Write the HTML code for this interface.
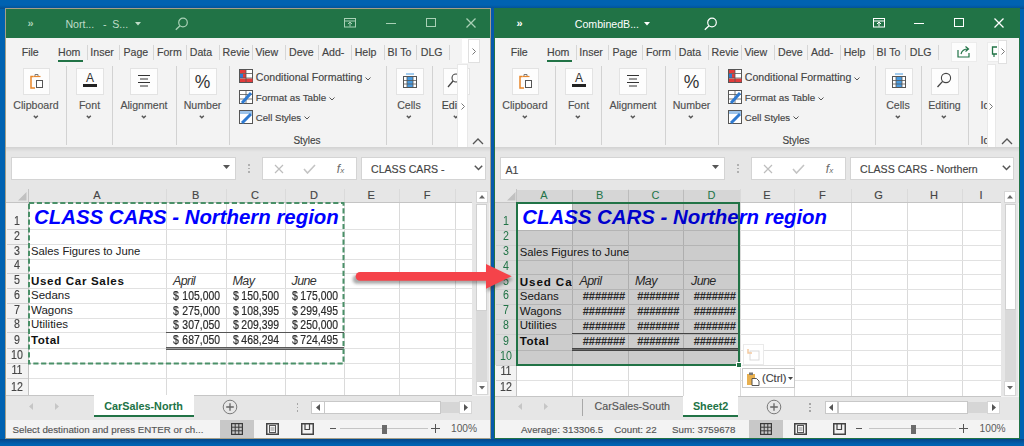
<!DOCTYPE html><html><head><meta charset="utf-8"><style>html,body{margin:0;padding:0;}body{width:1024px;height:446px;overflow:hidden;position:relative;background:#0062b1;font-family:"Liberation Sans",sans-serif;}.a{position:absolute;}.t{position:absolute;white-space:pre;}.u{-webkit-text-stroke:0.15px currentColor;}</style></head><body>
<div class="a" style="left:0px;top:0px;width:1024px;height:9px;background:linear-gradient(#0062b1 0%,#0062b1 55%,#044e92 100%);"></div>
<div class="a" style="left:489px;top:8px;width:7px;height:438px;background:#0658ac;"></div>
<div class="a" style="left:0px;top:439px;width:1024px;height:7px;background:linear-gradient(#03478a 0%,#04539c 35%,#0062b1 75%);"></div>
<div class="a" style="left:5px;top:8px;width:486px;height:431px;background:#f3f3f3;"></div>
<div class="a" style="left:5px;top:8px;width:486px;height:30px;background:#217346;"></div>
<div class="t" style="left:27.50px;top:18.19px;font-size:11px;line-height:11px;color:#a9d1b6;font-weight:700;">&#187;</div>
<div class="t" style="left:65.40px;top:18.53px;font-size:10.6px;line-height:10.6px;color:#bfdcc8;">Nort...</div>
<div class="t" style="left:103.00px;top:18.53px;font-size:10.6px;line-height:10.6px;color:#bfdcc8;">-</div>
<div class="t" style="left:112.30px;top:18.53px;font-size:10.6px;line-height:10.6px;color:#bfdcc8;">S...</div>
<svg class="a" style="left:135px;top:22px;" width="7" height="4" viewBox="0 0 7 4"><path d="M0 0 L6 0 L3 3.5 Z" fill="#bfdcc8"/></svg>
<svg class="a" style="left:175px;top:17px;" width="13" height="14" viewBox="0 0 13 14"><circle cx="8" cy="5.5" r="4.3" fill="none" stroke="#a9d1b6" stroke-width="1.2"/><path d="M5 8.7 L0.8 12.8" stroke="#a9d1b6" stroke-width="1.3"/></svg>
<svg class="a" style="left:344px;top:18px;" width="12" height="10" viewBox="0 0 12 10"><rect x="0.5" y="0.5" width="11" height="8.5" fill="none" stroke="#a9d1b6" stroke-width="1"/><path d="M0.5 3 H11.5" stroke="#a9d1b6"/><path d="M6 8.5 V4.2 M4 6 L6 4 L8 6" stroke="#a9d1b6" fill="none"/></svg>
<div class="a" style="left:386px;top:23px;width:10px;height:1px;background:#a9d1b6;"></div>
<div class="a" style="left:425.5px;top:18px;width:10.0px;height:9px;box-sizing:border-box;border:1px solid #a9d1b6;"></div>
<svg class="a" style="left:465.5px;top:18px;" width="10" height="10" viewBox="0 0 10 10"><path d="M0.5 0.5 L9.5 9.5 M9.5 0.5 L0.5 9.5" stroke="#a9d1b6" stroke-width="1.3"/></svg>
<div class="t u" style="left:21.70px;top:47.03px;font-size:10.6px;line-height:10.6px;color:#444;">File</div>
<div class="t u" style="left:58.00px;top:47.03px;font-size:10.6px;line-height:10.6px;color:#444;">Hom</div>
<div class="t u" style="left:90.30px;top:47.03px;font-size:10.6px;line-height:10.6px;color:#444;">Inser</div>
<div class="t u" style="left:123.50px;top:47.03px;font-size:10.6px;line-height:10.6px;color:#444;">Page</div>
<div class="t u" style="left:157.00px;top:47.03px;font-size:10.6px;line-height:10.6px;color:#444;">Form</div>
<div class="t u" style="left:189.80px;top:47.03px;font-size:10.6px;line-height:10.6px;color:#444;">Data</div>
<div class="t u" style="left:222.60px;top:47.03px;font-size:10.6px;line-height:10.6px;color:#444;">Revie</div>
<div class="t u" style="left:255.40px;top:47.03px;font-size:10.6px;line-height:10.6px;color:#444;">View</div>
<div class="t u" style="left:289.00px;top:47.03px;font-size:10.6px;line-height:10.6px;color:#444;">Deve</div>
<div class="t u" style="left:322.00px;top:47.03px;font-size:10.6px;line-height:10.6px;color:#444;">Add-</div>
<div class="t u" style="left:354.70px;top:47.03px;font-size:10.6px;line-height:10.6px;color:#444;">Help</div>
<div class="t u" style="left:387.50px;top:47.03px;font-size:10.6px;line-height:10.6px;color:#444;">BI To</div>
<div class="t u" style="left:420.80px;top:47.03px;font-size:10.6px;line-height:10.6px;color:#444;">DLG</div>
<div class="a" style="left:87px;top:45px;width:1px;height:15px;background:#d6d6d6;"></div>
<div class="a" style="left:119.4px;top:45px;width:1.0px;height:15px;background:#d6d6d6;"></div>
<div class="a" style="left:152.8px;top:45px;width:1.0px;height:15px;background:#d6d6d6;"></div>
<div class="a" style="left:186px;top:45px;width:1px;height:15px;background:#d6d6d6;"></div>
<div class="a" style="left:218.8px;top:45px;width:1.0px;height:15px;background:#d6d6d6;"></div>
<div class="a" style="left:251.7px;top:45px;width:1.0px;height:15px;background:#d6d6d6;"></div>
<div class="a" style="left:285.1px;top:45px;width:1.0px;height:15px;background:#d6d6d6;"></div>
<div class="a" style="left:318px;top:45px;width:1px;height:15px;background:#d6d6d6;"></div>
<div class="a" style="left:350.8px;top:45px;width:1.0px;height:15px;background:#d6d6d6;"></div>
<div class="a" style="left:383.6px;top:45px;width:1.0px;height:15px;background:#d6d6d6;"></div>
<div class="a" style="left:416.4px;top:45px;width:1.0px;height:15px;background:#d6d6d6;"></div>
<div class="a" style="left:449.2px;top:45px;width:1.0px;height:15px;background:#d6d6d6;"></div>
<div class="a" style="left:58px;top:59.8px;width:25px;height:2.5px;background:#217346;"></div>
<div class="a" style="left:23px;top:68px;width:27px;height:27px;background:#fdfdfd;box-sizing:border-box;border:1px solid #e3e3e3;"></div>
<div class="a" style="left:75.5px;top:68px;width:28.5px;height:27px;background:#fdfdfd;box-sizing:border-box;border:1px solid #e3e3e3;"></div>
<div class="a" style="left:130px;top:68px;width:28px;height:27px;background:#fdfdfd;box-sizing:border-box;border:1px solid #e3e3e3;"></div>
<div class="a" style="left:188.5px;top:68px;width:28.0px;height:27px;background:#fdfdfd;box-sizing:border-box;border:1px solid #e3e3e3;"></div>
<div class="a" style="left:396px;top:68px;width:28px;height:27px;background:#fdfdfd;box-sizing:border-box;border:1px solid #e3e3e3;"></div>
<svg class="a" style="left:30px;top:73px;" width="14" height="16" viewBox="0 0 14 16"><path d="M5 4 V1.5 H8 V4" fill="none" stroke="#7a7a7a"/><path d="M3.5 3.5 H1 V15 H5" fill="none" stroke="#e8862a" stroke-width="1.5"/><path d="M3.5 3.5 H10.5" stroke="#e8862a" stroke-width="1.2"/><rect x="6.5" y="7.5" width="6" height="7" fill="#fff" stroke="#555"/></svg>
<svg class="a" style="left:82px;top:71px;" width="16" height="20" viewBox="0 0 16 20"><text x="8" y="11" font-family="Liberation Sans" font-size="12" fill="#333" text-anchor="middle">A</text><rect x="1" y="13" width="14" height="3" fill="#222"/></svg>
<svg class="a" style="left:137px;top:74px;" width="14" height="14" viewBox="0 0 14 14"><path d="M1 1.5 H13 M3 5 H11 M1 8.5 H13 M3 12 H11" stroke="#333" stroke-width="1"/></svg>
<div class="t" style="left:52.50px;width:300px;text-align:center;top:73.69px;font-size:17.5px;line-height:17.5px;color:#333;">%</div>
<svg class="a" style="left:403px;top:72px;" width="14" height="17" viewBox="0 0 14 17"><rect x="0.5" y="4.5" width="13" height="11" fill="#fff" stroke="#555"/><rect x="4" y="5" width="6" height="10" fill="#4a9be0"/><path d="M0.5 8.5 H13.5 M0.5 12 H13.5 M4 4.5 V15.5 M10 4.5 V15.5" stroke="#555" stroke-width="0.8"/><path d="M3 2 H11" stroke="#4a9be0" stroke-width="1"/></svg>
<div class="t u" style="left:-114.00px;width:300px;text-align:center;top:99.53px;font-size:10.6px;line-height:10.6px;color:#505050;">Clipboard</div>
<svg class="a" style="left:32.7px;top:115.3px;" width="6" height="4" viewBox="0 0 6 4"><path d="M0.8 0.8 L2.8 2.8 L4.8 0.8" fill="none" stroke="#555" stroke-width="1.4"/></svg>
<div class="t u" style="left:-60.50px;width:300px;text-align:center;top:99.53px;font-size:10.6px;line-height:10.6px;color:#505050;">Font</div>
<svg class="a" style="left:86.2px;top:115.3px;" width="6" height="4" viewBox="0 0 6 4"><path d="M0.8 0.8 L2.8 2.8 L4.8 0.8" fill="none" stroke="#555" stroke-width="1.4"/></svg>
<div class="t u" style="left:-6.00px;width:300px;text-align:center;top:99.53px;font-size:10.6px;line-height:10.6px;color:#505050;">Alignment</div>
<svg class="a" style="left:140.7px;top:115.3px;" width="6" height="4" viewBox="0 0 6 4"><path d="M0.8 0.8 L2.8 2.8 L4.8 0.8" fill="none" stroke="#555" stroke-width="1.4"/></svg>
<div class="t u" style="left:52.50px;width:300px;text-align:center;top:99.53px;font-size:10.6px;line-height:10.6px;color:#505050;">Number</div>
<svg class="a" style="left:199.2px;top:115.3px;" width="6" height="4" viewBox="0 0 6 4"><path d="M0.8 0.8 L2.8 2.8 L4.8 0.8" fill="none" stroke="#555" stroke-width="1.4"/></svg>
<div class="t u" style="left:259.00px;width:300px;text-align:center;top:99.53px;font-size:10.6px;line-height:10.6px;color:#505050;">Cells</div>
<svg class="a" style="left:405.7px;top:115.3px;" width="6" height="4" viewBox="0 0 6 4"><path d="M0.8 0.8 L2.8 2.8 L4.8 0.8" fill="none" stroke="#555" stroke-width="1.4"/></svg>
<div class="a" style="left:65.6px;top:66px;width:1.0px;height:79px;background:#d2d2d2;"></div>
<div class="a" style="left:112.4px;top:66px;width:1.0px;height:79px;background:#d2d2d2;"></div>
<div class="a" style="left:176px;top:66px;width:1px;height:79px;background:#d2d2d2;"></div>
<div class="a" style="left:228.8px;top:66px;width:1.0px;height:79px;background:#d2d2d2;"></div>
<div class="a" style="left:385.6px;top:66px;width:1.0px;height:79px;background:#d2d2d2;"></div>
<div class="a" style="left:432.3px;top:66px;width:1.0px;height:79px;background:#d2d2d2;"></div>
<svg class="a" style="left:239px;top:69px;" width="14" height="14" viewBox="0 0 14 14"><rect x="0.5" y="0.5" width="13" height="13" fill="#fff" stroke="#555"/><rect x="1" y="1" width="6" height="3.5" fill="#e23b3b"/><rect x="1" y="5" width="3" height="4" fill="#2f7ad1"/><rect x="4" y="5" width="3" height="4" fill="#e23b3b"/><rect x="1" y="9.5" width="12.5" height="3.5" fill="#e23b3b"/><path d="M0.5 4.5 H13.5 M0.5 9 H13.5 M7 0.5 V13.5" stroke="#555" stroke-width="0.8"/></svg>
<svg class="a" style="left:239px;top:90px;" width="14" height="14" viewBox="0 0 14 14"><rect x="0.5" y="0.5" width="13" height="13" fill="#fff" stroke="#555"/><path d="M0.5 4.5 H13.5 M0.5 9 H13.5 M7 0.5 V13.5" stroke="#555" stroke-width="0.8"/><path d="M3 13 L12 3" stroke="#2f7ad1" stroke-width="3"/></svg>
<svg class="a" style="left:239px;top:110px;" width="14" height="14" viewBox="0 0 14 14"><rect x="0.5" y="0.5" width="13" height="13" fill="#fff" stroke="#555"/><rect x="1" y="1" width="12" height="3" fill="#9cc3ea"/><path d="M3 13 L12 4" stroke="#2f7ad1" stroke-width="3"/></svg>
<div class="t u" style="left:255.80px;top:72.33px;font-size:10.6px;line-height:10.6px;color:#444;">Conditional Formatting</div>
<div class="t u" style="left:255.80px;top:93.26px;font-size:9.85px;line-height:9.85px;color:#444;">Format as Table</div>
<div class="t u" style="left:255.80px;top:113.47px;font-size:9.6px;line-height:9.6px;color:#444;">Cell Styles</div>
<svg class="a" style="left:365px;top:76.5px;" width="6" height="4" viewBox="0 0 6 4"><path d="M0.5 0.5 L3 3 L5.5 0.5" fill="none" stroke="#555" stroke-width="1"/></svg>
<svg class="a" style="left:329px;top:96.5px;" width="6" height="4" viewBox="0 0 6 4"><path d="M0.5 0.5 L3 3 L5.5 0.5" fill="none" stroke="#555" stroke-width="1"/></svg>
<svg class="a" style="left:303.5px;top:116px;" width="6" height="4" viewBox="0 0 6 4"><path d="M0.5 0.5 L3 3 L5.5 0.5" fill="none" stroke="#555" stroke-width="1"/></svg>
<div class="t u" style="left:157.00px;width:300px;text-align:center;top:136.13px;font-size:10px;line-height:10px;color:#444;">Styles</div>
<div class="a" style="left:442.7px;top:68px;width:27.30000000000001px;height:27px;background:#fdfdfd;box-sizing:border-box;border:1px solid #e3e3e3;"></div>
<svg class="a" style="left:447px;top:73px;" width="14" height="16" viewBox="0 0 14 16"><circle cx="9" cy="5" r="4" fill="none" stroke="#444" stroke-width="1.1"/><path d="M6 8 L1 14" stroke="#444" stroke-width="1.3"/></svg>
<div class="t u" style="left:441.80px;top:99.53px;font-size:10.6px;line-height:10.6px;color:#444;width:16px;overflow:hidden;">Editing</div>
<svg class="a" style="left:452.7px;top:115.3px;" width="6" height="4" viewBox="0 0 6 4"><path d="M0.8 0.8 L2.8 2.8 L4.8 0.8" fill="none" stroke="#555" stroke-width="1.4"/></svg>
<div class="a" style="left:457.4px;top:64px;width:11.100000000000023px;height:84px;background:#ffffff;box-sizing:border-box;border:1px solid #e8e8e8;"></div>
<svg class="a" style="left:461px;top:103px;" width="5" height="7" viewBox="0 0 5 7"><path d="M0.5 0.5 L3.5 3.5 L0.5 6.5" fill="none" stroke="#777" stroke-width="1"/></svg>
<div class="a" style="left:462px;top:39px;width:6px;height:24px;background:#ffffff;"></div>
<div class="a" style="left:468px;top:39px;width:11.5px;height:24px;background:#ffffff;box-sizing:border-box;border:1px solid #e0e0e0;"></div>
<svg class="a" style="left:472px;top:48px;" width="5" height="7" viewBox="0 0 5 7"><path d="M0.5 0.5 L3.5 3.5 L0.5 6.5" fill="none" stroke="#777" stroke-width="1"/></svg>
<svg class="a" style="left:472px;top:138px;" width="12" height="7" viewBox="0 0 12 7"><path d="M1 6 L6 1 L11 6" fill="none" stroke="#555" stroke-width="1.3"/></svg>
<div class="a" style="left:5px;top:147px;width:486px;height:56px;background:#e6e6e6;"></div>
<div class="a" style="left:5px;top:147px;width:486px;height:5px;background:linear-gradient(#d2d2d2,#e6e6e6);"></div>
<div class="a" style="left:11px;top:157px;width:224.5px;height:23px;background:#fff;box-sizing:border-box;border:1px solid #d4d4d4;"></div>
<svg class="a" style="left:222.5px;top:165px;" width="8" height="5" viewBox="0 0 8 5"><path d="M0 0 H7 L3.5 4 Z" fill="#555"/></svg>
<div class="a" style="left:248px;top:164px;width:1.5px;height:1.5px;background:#b0b0b0;"></div>
<div class="a" style="left:248px;top:167.5px;width:1.5px;height:1.5px;background:#b0b0b0;"></div>
<div class="a" style="left:248px;top:171px;width:1.5px;height:1.5px;background:#b0b0b0;"></div>
<div class="a" style="left:262px;top:157px;width:94.5px;height:23px;background:#fff;box-sizing:border-box;border:1px solid #d4d4d4;"></div>
<svg class="a" style="left:273.5px;top:163.5px;" width="10" height="10" viewBox="0 0 10 10"><path d="M1 1 L9 9 M9 1 L1 9" stroke="#bdbdbd" stroke-width="1.2"/></svg>
<svg class="a" style="left:303px;top:163.5px;" width="13" height="10" viewBox="0 0 13 10"><path d="M1 5 L4.5 9 L12 1" fill="none" stroke="#c4c4c4" stroke-width="1.6"/></svg>
<div class="t" style="left:190.50px;width:300px;text-align:center;top:162.84px;font-size:12px;line-height:12px;color:#6a6a6a;font-family:"Liberation Serif",sans-serif;"><i>f</i><span style='font-size:8px'><i>x</i></span></div>
<div class="a" style="left:360.5px;top:157px;width:125.0px;height:23px;background:#fff;box-sizing:border-box;border:1px solid #d4d4d4;"></div>
<div class="t u" style="left:371.00px;top:164.03px;font-size:10.6px;line-height:10.6px;color:#444;">CLASS CARS -</div>
<svg class="a" style="left:473.5px;top:165px;" width="9" height="6" viewBox="0 0 9 6"><path d="M0.8 0.8 L4.5 4.5 L8.2 0.8" fill="none" stroke="#555" stroke-width="1.5"/></svg>
<div class="a" style="left:28px;top:202px;width:444px;height:193px;background:#ffffff;"></div>
<div class="a" style="left:166px;top:188.5px;width:1px;height:206.5px;background:#dadada;"></div>
<div class="a" style="left:225.5px;top:188.5px;width:1.0px;height:206.5px;background:#dadada;"></div>
<div class="a" style="left:284.5px;top:188.5px;width:1.0px;height:206.5px;background:#dadada;"></div>
<div class="a" style="left:343.5px;top:188.5px;width:1.0px;height:206.5px;background:#dadada;"></div>
<div class="a" style="left:399px;top:188.5px;width:1px;height:206.5px;background:#dadada;"></div>
<div class="a" style="left:455px;top:188.5px;width:1px;height:206.5px;background:#dadada;"></div>
<div class="a" style="left:28px;top:229px;width:444px;height:1px;background:#e1e1e1;"></div>
<div class="a" style="left:28px;top:243.8px;width:444px;height:1.0px;background:#e1e1e1;"></div>
<div class="a" style="left:28px;top:258.8px;width:444px;height:1.0px;background:#e1e1e1;"></div>
<div class="a" style="left:28px;top:273.3px;width:444px;height:1.0px;background:#e1e1e1;"></div>
<div class="a" style="left:28px;top:288.2px;width:444px;height:1.0px;background:#e1e1e1;"></div>
<div class="a" style="left:28px;top:303px;width:444px;height:1px;background:#e1e1e1;"></div>
<div class="a" style="left:28px;top:317.8px;width:444px;height:1.0px;background:#e1e1e1;"></div>
<div class="a" style="left:28px;top:332.3px;width:444px;height:1.0px;background:#e1e1e1;"></div>
<div class="a" style="left:28px;top:348px;width:444px;height:1px;background:#e1e1e1;"></div>
<div class="a" style="left:28px;top:363px;width:444px;height:1px;background:#e1e1e1;"></div>
<div class="a" style="left:28px;top:378px;width:444px;height:1px;background:#e1e1e1;"></div>
<div class="a" style="left:5px;top:202px;width:467px;height:1px;background:#c4c4c4;"></div>
<div class="a" style="left:28px;top:188.5px;width:1px;height:206.5px;background:#c4c4c4;"></div>
<div class="a" style="left:5px;top:395px;width:467px;height:1px;background:#c6c6c6;"></div>
<div class="a" style="left:7px;top:229px;width:21px;height:1px;background:#d0d0d0;"></div>
<div class="a" style="left:7px;top:243.8px;width:21px;height:1.0px;background:#d0d0d0;"></div>
<div class="a" style="left:7px;top:258.8px;width:21px;height:1.0px;background:#d0d0d0;"></div>
<div class="a" style="left:7px;top:273.3px;width:21px;height:1.0px;background:#d0d0d0;"></div>
<div class="a" style="left:7px;top:288.2px;width:21px;height:1.0px;background:#d0d0d0;"></div>
<div class="a" style="left:7px;top:303px;width:21px;height:1px;background:#d0d0d0;"></div>
<div class="a" style="left:7px;top:317.8px;width:21px;height:1.0px;background:#d0d0d0;"></div>
<div class="a" style="left:7px;top:332.3px;width:21px;height:1.0px;background:#d0d0d0;"></div>
<div class="a" style="left:7px;top:348px;width:21px;height:1px;background:#d0d0d0;"></div>
<div class="a" style="left:7px;top:363px;width:21px;height:1px;background:#d0d0d0;"></div>
<div class="a" style="left:7px;top:378px;width:21px;height:1px;background:#d0d0d0;"></div>
<svg class="a" style="left:17.5px;top:191.5px;" width="9" height="9" viewBox="0 0 9 9"><path d="M8.5 0 V8.5 H0 Z" fill="#c1c1c1"/></svg>
<div class="t u" style="left:-53.00px;width:300px;text-align:center;top:190.49px;font-size:11px;line-height:11px;color:#444;">A</div>
<div class="t u" style="left:45.75px;width:300px;text-align:center;top:190.49px;font-size:11px;line-height:11px;color:#444;">B</div>
<div class="t u" style="left:105.00px;width:300px;text-align:center;top:190.49px;font-size:11px;line-height:11px;color:#444;">C</div>
<div class="t u" style="left:164.00px;width:300px;text-align:center;top:190.49px;font-size:11px;line-height:11px;color:#444;">D</div>
<div class="t u" style="left:221.25px;width:300px;text-align:center;top:190.49px;font-size:11px;line-height:11px;color:#444;">E</div>
<div class="t u" style="left:277.00px;width:300px;text-align:center;top:190.49px;font-size:11px;line-height:11px;color:#444;">F</div>
<div class="t u" style="left:-133.00px;width:300px;text-align:center;top:214.80px;font-size:12.4px;line-height:12.4px;color:#444;transform:scaleX(0.86);">1</div>
<div class="t u" style="left:-133.00px;width:300px;text-align:center;top:229.60px;font-size:12.4px;line-height:12.4px;color:#444;transform:scaleX(0.86);">2</div>
<div class="t u" style="left:-133.00px;width:300px;text-align:center;top:244.60px;font-size:12.4px;line-height:12.4px;color:#444;transform:scaleX(0.86);">3</div>
<div class="t u" style="left:-133.00px;width:300px;text-align:center;top:259.10px;font-size:12.4px;line-height:12.4px;color:#444;transform:scaleX(0.86);">4</div>
<div class="t u" style="left:-133.00px;width:300px;text-align:center;top:274.00px;font-size:12.4px;line-height:12.4px;color:#444;transform:scaleX(0.86);">5</div>
<div class="t u" style="left:-133.00px;width:300px;text-align:center;top:288.80px;font-size:12.4px;line-height:12.4px;color:#444;transform:scaleX(0.86);">6</div>
<div class="t u" style="left:-133.00px;width:300px;text-align:center;top:303.60px;font-size:12.4px;line-height:12.4px;color:#444;transform:scaleX(0.86);">7</div>
<div class="t u" style="left:-133.00px;width:300px;text-align:center;top:318.10px;font-size:12.4px;line-height:12.4px;color:#444;transform:scaleX(0.86);">8</div>
<div class="t u" style="left:-133.00px;width:300px;text-align:center;top:333.80px;font-size:12.4px;line-height:12.4px;color:#444;transform:scaleX(0.86);">9</div>
<div class="t u" style="left:-133.00px;width:300px;text-align:center;top:348.80px;font-size:12.4px;line-height:12.4px;color:#444;transform:scaleX(0.86);">10</div>
<div class="t u" style="left:-133.00px;width:300px;text-align:center;top:363.80px;font-size:12.4px;line-height:12.4px;color:#444;transform:scaleX(0.86);">11</div>
<div class="t u" style="left:-133.00px;width:300px;text-align:center;top:380.80px;font-size:12.4px;line-height:12.4px;color:#444;transform:scaleX(0.86);">12</div>
<div class="a" style="left:472px;top:188.5px;width:17px;height:206.5px;background:#e6e6e6;"></div>
<div class="a" style="left:475.5px;top:190.5px;width:12.0px;height:12.5px;background:#ffffff;box-sizing:border-box;border:1px solid #d6d6d6;"></div>
<svg class="a" style="left:478.5px;top:194.5px;" width="7" height="4" viewBox="0 0 7 4"><path d="M0 3.5 L3 0 L6 3.5 Z" fill="#666"/></svg>
<div class="a" style="left:476px;top:204px;width:11px;height:107px;background:#ffffff;box-sizing:border-box;border:1px solid #d0d0d0;"></div>
<div class="a" style="left:476px;top:311px;width:11px;height:70px;background:#d9d9d9;"></div>
<div class="a" style="left:475.5px;top:381px;width:12.0px;height:14px;background:#ffffff;box-sizing:border-box;border:1px solid #d6d6d6;"></div>
<svg class="a" style="left:478.5px;top:386px;" width="7" height="4" viewBox="0 0 7 4"><path d="M0 0 L3 3.5 L6 0 Z" fill="#666"/></svg>
<div class="a" style="left:5px;top:396px;width:486px;height:24px;background:#e6e6e6;"></div>
<div class="a" style="left:5px;top:419.5px;width:486px;height:1.0px;background:#d6d6d6;"></div>
<svg class="a" style="left:29px;top:402.5px;" width="5" height="8" viewBox="0 0 5 8"><path d="M4 0 L0 3.5 L4 7 Z" fill="#c6c6c6"/></svg>
<svg class="a" style="left:55px;top:402.5px;" width="5" height="8" viewBox="0 0 5 8"><path d="M0 0 L4 3.5 L0 7 Z" fill="#c6c6c6"/></svg>
<div class="a" style="left:93.6px;top:395px;width:100.0px;height:21.5px;background:#ffffff;"></div>
<div class="a" style="left:93.6px;top:414.5px;width:100.0px;height:2.0px;background:#217346;"></div>
<div class="t" style="left:-6.40px;width:300px;text-align:center;top:401.36px;font-size:10.8px;line-height:10.8px;color:#217346;font-weight:700;">CarSales-North</div>
<svg class="a" style="left:221.5px;top:398.5px;" width="16" height="16" viewBox="0 0 16 16"><circle cx="8" cy="8" r="6.8" fill="none" stroke="#7a7a7a" stroke-width="1"/><path d="M8 4.2 V11.8 M4.2 8 H11.8" stroke="#666" stroke-width="1.3"/></svg>
<div class="a" style="left:296.8px;top:403px;width:1.5px;height:1.5px;background:#a6a6a6;"></div>
<div class="a" style="left:296.8px;top:406.5px;width:1.5px;height:1.5px;background:#a6a6a6;"></div>
<div class="a" style="left:296.8px;top:410px;width:1.5px;height:1.5px;background:#a6a6a6;"></div>
<div class="a" style="left:311px;top:401px;width:13.5px;height:13px;background:#fff;box-sizing:border-box;border:1px solid #c8c8c8;"></div>
<svg class="a" style="left:315.5px;top:404px;" width="5" height="8" viewBox="0 0 5 8"><path d="M4 0 L0 3.5 L4 7 Z" fill="#555"/></svg>
<div class="a" style="left:324px;top:401px;width:117px;height:13px;background:#fff;box-sizing:border-box;border:1px solid #c8c8c8;"></div>
<div class="a" style="left:441px;top:402px;width:18px;height:11px;background:#d6d6d6;"></div>
<div class="a" style="left:459px;top:401px;width:13px;height:13px;background:#fff;box-sizing:border-box;border:1px solid #d6d6d6;"></div>
<svg class="a" style="left:464px;top:404px;" width="5" height="8" viewBox="0 0 5 8"><path d="M0 0 L4 3.5 L0 7 Z" fill="#555"/></svg>
<div class="a" style="left:5px;top:420px;width:486px;height:19px;background:#f3f3f3;"></div>
<div class="t u" style="left:12.60px;top:424.75px;font-size:9.75px;line-height:9.75px;color:#555;">Select destination and press ENTER or ch...</div>
<div class="a" style="left:220.3px;top:420px;width:34.0px;height:19px;background:#c8c8c8;"></div>
<svg class="a" style="left:231.3px;top:423px;" width="12" height="12" viewBox="0 0 12 12"><rect x="0.6" y="0.6" width="10.8" height="10.8" fill="none" stroke="#3a3a3a" stroke-width="1.2"/><path d="M4.2 0.5 V11.5 M7.8 0.5 V11.5 M0.5 4.2 H11.5 M0.5 7.8 H11.5" stroke="#3a3a3a" stroke-width="1"/></svg>
<svg class="a" style="left:266px;top:422.5px;" width="13" height="12" viewBox="0 0 13 12"><rect x="0.75" y="0.75" width="11.5" height="10.5" fill="none" stroke="#444" stroke-width="1.5"/><rect x="3.5" y="2.5" width="6" height="7" fill="none" stroke="#555" stroke-width="1"/><path d="M4.5 5 H8.5 M4.5 7 H8.5" stroke="#777" stroke-width="0.8"/></svg>
<svg class="a" style="left:300.5px;top:422.5px;" width="13" height="12" viewBox="0 0 13 12"><rect x="0.75" y="0.75" width="11.5" height="10.5" fill="none" stroke="#444" stroke-width="1.5"/><path d="M4 0.5 V6.5 H8.5 V0.5" fill="none" stroke="#444" stroke-width="1.2"/></svg>
<div class="a" style="left:330px;top:428px;width:6px;height:1.3000000000000114px;background:#555;"></div>
<div class="a" style="left:340px;top:428px;width:88px;height:1.1999999999999886px;background:#c4c4c4;"></div>
<div class="a" style="left:382.3px;top:424.5px;width:4.5px;height:9.0px;background:#6a6a6a;"></div>
<div class="a" style="left:430.7px;top:428px;width:9.0px;height:1.3000000000000114px;background:#555;"></div>
<div class="a" style="left:434.59999999999997px;top:423.5px;width:1.3000000000000114px;height:9.0px;background:#555;"></div>
<div class="t" style="left:451.00px;top:423.97px;font-size:10.2px;line-height:10.2px;color:#5a5a5a;">100%</div>
<div class="a" style="left:494px;top:8px;width:525px;height:431px;background:#f3f3f3;"></div>
<div class="a" style="left:494px;top:8px;width:525px;height:30px;background:#217346;"></div>
<div class="t" style="left:516.50px;top:18.19px;font-size:11px;line-height:11px;color:#ffffff;font-weight:700;">&#187;</div>
<div class="t" style="left:574.80px;top:18.53px;font-size:10.6px;line-height:10.6px;color:#ffffff;">CombinedB...</div>
<svg class="a" style="left:643.5px;top:22px;" width="7" height="4" viewBox="0 0 7 4"><path d="M0 0 L6 0 L3 3.5 Z" fill="#ffffff"/></svg>
<svg class="a" style="left:703.5px;top:17px;" width="13" height="14" viewBox="0 0 13 14"><circle cx="8" cy="5.5" r="4.3" fill="none" stroke="#ffffff" stroke-width="1.2"/><path d="M5 8.7 L0.8 12.8" stroke="#ffffff" stroke-width="1.3"/></svg>
<svg class="a" style="left:873px;top:18px;" width="12" height="10" viewBox="0 0 12 10"><rect x="0.5" y="0.5" width="11" height="8.5" fill="none" stroke="#ffffff" stroke-width="1"/><path d="M0.5 3 H11.5" stroke="#ffffff"/><path d="M6 8.5 V4.2 M4 6 L6 4 L8 6" stroke="#ffffff" fill="none"/></svg>
<div class="a" style="left:914px;top:23px;width:10px;height:1px;background:#ffffff;"></div>
<div class="a" style="left:953.5px;top:18px;width:10.0px;height:9px;box-sizing:border-box;border:1px solid #ffffff;"></div>
<svg class="a" style="left:994px;top:18px;" width="10" height="10" viewBox="0 0 10 10"><path d="M0.5 0.5 L9.5 9.5 M9.5 0.5 L0.5 9.5" stroke="#ffffff" stroke-width="1.3"/></svg>
<div class="t u" style="left:510.70px;top:47.03px;font-size:10.6px;line-height:10.6px;color:#444;">File</div>
<div class="t u" style="left:547.00px;top:47.03px;font-size:10.6px;line-height:10.6px;color:#444;">Hom</div>
<div class="t u" style="left:579.30px;top:47.03px;font-size:10.6px;line-height:10.6px;color:#444;">Inser</div>
<div class="t u" style="left:612.50px;top:47.03px;font-size:10.6px;line-height:10.6px;color:#444;">Page</div>
<div class="t u" style="left:646.00px;top:47.03px;font-size:10.6px;line-height:10.6px;color:#444;">Form</div>
<div class="t u" style="left:678.80px;top:47.03px;font-size:10.6px;line-height:10.6px;color:#444;">Data</div>
<div class="t u" style="left:711.60px;top:47.03px;font-size:10.6px;line-height:10.6px;color:#444;">Revie</div>
<div class="t u" style="left:744.40px;top:47.03px;font-size:10.6px;line-height:10.6px;color:#444;">View</div>
<div class="t u" style="left:778.00px;top:47.03px;font-size:10.6px;line-height:10.6px;color:#444;">Deve</div>
<div class="t u" style="left:811.00px;top:47.03px;font-size:10.6px;line-height:10.6px;color:#444;">Add-</div>
<div class="t u" style="left:843.70px;top:47.03px;font-size:10.6px;line-height:10.6px;color:#444;">Help</div>
<div class="t u" style="left:876.50px;top:47.03px;font-size:10.6px;line-height:10.6px;color:#444;">BI To</div>
<div class="t u" style="left:909.80px;top:47.03px;font-size:10.6px;line-height:10.6px;color:#444;">DLG</div>
<div class="a" style="left:576px;top:45px;width:1px;height:15px;background:#d6d6d6;"></div>
<div class="a" style="left:608.4px;top:45px;width:1.0px;height:15px;background:#d6d6d6;"></div>
<div class="a" style="left:641.8px;top:45px;width:1.0px;height:15px;background:#d6d6d6;"></div>
<div class="a" style="left:675px;top:45px;width:1px;height:15px;background:#d6d6d6;"></div>
<div class="a" style="left:707.8px;top:45px;width:1.0px;height:15px;background:#d6d6d6;"></div>
<div class="a" style="left:740.7px;top:45px;width:1.0px;height:15px;background:#d6d6d6;"></div>
<div class="a" style="left:774.1px;top:45px;width:1.0px;height:15px;background:#d6d6d6;"></div>
<div class="a" style="left:807px;top:45px;width:1px;height:15px;background:#d6d6d6;"></div>
<div class="a" style="left:839.8px;top:45px;width:1.0px;height:15px;background:#d6d6d6;"></div>
<div class="a" style="left:872.6px;top:45px;width:1.0px;height:15px;background:#d6d6d6;"></div>
<div class="a" style="left:905.4px;top:45px;width:1.0px;height:15px;background:#d6d6d6;"></div>
<div class="a" style="left:938.2px;top:45px;width:1.0px;height:15px;background:#d6d6d6;"></div>
<div class="a" style="left:547px;top:59.8px;width:25px;height:2.5px;background:#217346;"></div>
<div class="a" style="left:512px;top:68px;width:27px;height:27px;background:#fdfdfd;box-sizing:border-box;border:1px solid #e3e3e3;"></div>
<div class="a" style="left:564.5px;top:68px;width:28.5px;height:27px;background:#fdfdfd;box-sizing:border-box;border:1px solid #e3e3e3;"></div>
<div class="a" style="left:619px;top:68px;width:28px;height:27px;background:#fdfdfd;box-sizing:border-box;border:1px solid #e3e3e3;"></div>
<div class="a" style="left:677.5px;top:68px;width:28.0px;height:27px;background:#fdfdfd;box-sizing:border-box;border:1px solid #e3e3e3;"></div>
<div class="a" style="left:885px;top:68px;width:28px;height:27px;background:#fdfdfd;box-sizing:border-box;border:1px solid #e3e3e3;"></div>
<svg class="a" style="left:519px;top:73px;" width="14" height="16" viewBox="0 0 14 16"><path d="M5 4 V1.5 H8 V4" fill="none" stroke="#7a7a7a"/><path d="M3.5 3.5 H1 V15 H5" fill="none" stroke="#e8862a" stroke-width="1.5"/><path d="M3.5 3.5 H10.5" stroke="#e8862a" stroke-width="1.2"/><rect x="6.5" y="7.5" width="6" height="7" fill="#fff" stroke="#555"/></svg>
<svg class="a" style="left:571px;top:71px;" width="16" height="20" viewBox="0 0 16 20"><text x="8" y="11" font-family="Liberation Sans" font-size="12" fill="#333" text-anchor="middle">A</text><rect x="1" y="13" width="14" height="3" fill="#222"/></svg>
<svg class="a" style="left:626px;top:74px;" width="14" height="14" viewBox="0 0 14 14"><path d="M1 1.5 H13 M3 5 H11 M1 8.5 H13 M3 12 H11" stroke="#333" stroke-width="1"/></svg>
<div class="t" style="left:541.50px;width:300px;text-align:center;top:73.69px;font-size:17.5px;line-height:17.5px;color:#333;">%</div>
<svg class="a" style="left:892px;top:72px;" width="14" height="17" viewBox="0 0 14 17"><rect x="0.5" y="4.5" width="13" height="11" fill="#fff" stroke="#555"/><rect x="4" y="5" width="6" height="10" fill="#4a9be0"/><path d="M0.5 8.5 H13.5 M0.5 12 H13.5 M4 4.5 V15.5 M10 4.5 V15.5" stroke="#555" stroke-width="0.8"/><path d="M3 2 H11" stroke="#4a9be0" stroke-width="1"/></svg>
<div class="t u" style="left:375.00px;width:300px;text-align:center;top:99.53px;font-size:10.6px;line-height:10.6px;color:#505050;">Clipboard</div>
<svg class="a" style="left:521.7px;top:115.3px;" width="6" height="4" viewBox="0 0 6 4"><path d="M0.8 0.8 L2.8 2.8 L4.8 0.8" fill="none" stroke="#555" stroke-width="1.4"/></svg>
<div class="t u" style="left:428.50px;width:300px;text-align:center;top:99.53px;font-size:10.6px;line-height:10.6px;color:#505050;">Font</div>
<svg class="a" style="left:575.2px;top:115.3px;" width="6" height="4" viewBox="0 0 6 4"><path d="M0.8 0.8 L2.8 2.8 L4.8 0.8" fill="none" stroke="#555" stroke-width="1.4"/></svg>
<div class="t u" style="left:483.00px;width:300px;text-align:center;top:99.53px;font-size:10.6px;line-height:10.6px;color:#505050;">Alignment</div>
<svg class="a" style="left:629.7px;top:115.3px;" width="6" height="4" viewBox="0 0 6 4"><path d="M0.8 0.8 L2.8 2.8 L4.8 0.8" fill="none" stroke="#555" stroke-width="1.4"/></svg>
<div class="t u" style="left:541.50px;width:300px;text-align:center;top:99.53px;font-size:10.6px;line-height:10.6px;color:#505050;">Number</div>
<svg class="a" style="left:688.2px;top:115.3px;" width="6" height="4" viewBox="0 0 6 4"><path d="M0.8 0.8 L2.8 2.8 L4.8 0.8" fill="none" stroke="#555" stroke-width="1.4"/></svg>
<div class="t u" style="left:748.00px;width:300px;text-align:center;top:99.53px;font-size:10.6px;line-height:10.6px;color:#505050;">Cells</div>
<svg class="a" style="left:894.7px;top:115.3px;" width="6" height="4" viewBox="0 0 6 4"><path d="M0.8 0.8 L2.8 2.8 L4.8 0.8" fill="none" stroke="#555" stroke-width="1.4"/></svg>
<div class="a" style="left:554.6px;top:66px;width:1.0px;height:79px;background:#d2d2d2;"></div>
<div class="a" style="left:601.4px;top:66px;width:1.0px;height:79px;background:#d2d2d2;"></div>
<div class="a" style="left:665px;top:66px;width:1px;height:79px;background:#d2d2d2;"></div>
<div class="a" style="left:717.8px;top:66px;width:1.0px;height:79px;background:#d2d2d2;"></div>
<div class="a" style="left:874.6px;top:66px;width:1.0px;height:79px;background:#d2d2d2;"></div>
<div class="a" style="left:921.3px;top:66px;width:1.0px;height:79px;background:#d2d2d2;"></div>
<svg class="a" style="left:728px;top:69px;" width="14" height="14" viewBox="0 0 14 14"><rect x="0.5" y="0.5" width="13" height="13" fill="#fff" stroke="#555"/><rect x="1" y="1" width="6" height="3.5" fill="#e23b3b"/><rect x="1" y="5" width="3" height="4" fill="#2f7ad1"/><rect x="4" y="5" width="3" height="4" fill="#e23b3b"/><rect x="1" y="9.5" width="12.5" height="3.5" fill="#e23b3b"/><path d="M0.5 4.5 H13.5 M0.5 9 H13.5 M7 0.5 V13.5" stroke="#555" stroke-width="0.8"/></svg>
<svg class="a" style="left:728px;top:90px;" width="14" height="14" viewBox="0 0 14 14"><rect x="0.5" y="0.5" width="13" height="13" fill="#fff" stroke="#555"/><path d="M0.5 4.5 H13.5 M0.5 9 H13.5 M7 0.5 V13.5" stroke="#555" stroke-width="0.8"/><path d="M3 13 L12 3" stroke="#2f7ad1" stroke-width="3"/></svg>
<svg class="a" style="left:728px;top:110px;" width="14" height="14" viewBox="0 0 14 14"><rect x="0.5" y="0.5" width="13" height="13" fill="#fff" stroke="#555"/><rect x="1" y="1" width="12" height="3" fill="#9cc3ea"/><path d="M3 13 L12 4" stroke="#2f7ad1" stroke-width="3"/></svg>
<div class="t u" style="left:744.80px;top:72.33px;font-size:10.6px;line-height:10.6px;color:#444;">Conditional Formatting</div>
<div class="t u" style="left:744.80px;top:93.26px;font-size:9.85px;line-height:9.85px;color:#444;">Format as Table</div>
<div class="t u" style="left:744.80px;top:113.47px;font-size:9.6px;line-height:9.6px;color:#444;">Cell Styles</div>
<svg class="a" style="left:854px;top:76.5px;" width="6" height="4" viewBox="0 0 6 4"><path d="M0.5 0.5 L3 3 L5.5 0.5" fill="none" stroke="#555" stroke-width="1"/></svg>
<svg class="a" style="left:818px;top:96.5px;" width="6" height="4" viewBox="0 0 6 4"><path d="M0.5 0.5 L3 3 L5.5 0.5" fill="none" stroke="#555" stroke-width="1"/></svg>
<svg class="a" style="left:792.5px;top:116px;" width="6" height="4" viewBox="0 0 6 4"><path d="M0.5 0.5 L3 3 L5.5 0.5" fill="none" stroke="#555" stroke-width="1"/></svg>
<div class="t u" style="left:646.00px;width:300px;text-align:center;top:136.13px;font-size:10px;line-height:10px;color:#444;">Styles</div>
<div class="a" style="left:931px;top:68px;width:27.5px;height:27px;background:#fdfdfd;box-sizing:border-box;border:1px solid #e3e3e3;"></div>
<svg class="a" style="left:936px;top:72px;" width="16" height="17" viewBox="0 0 16 17"><circle cx="10" cy="6" r="4.6" fill="none" stroke="#444" stroke-width="1.1"/><path d="M6.6 9.4 L1.5 15" stroke="#444" stroke-width="1.3"/></svg>
<div class="t u" style="left:794.50px;width:300px;text-align:center;top:99.53px;font-size:10.6px;line-height:10.6px;color:#505050;">Editing</div>
<svg class="a" style="left:941.2px;top:115.3px;" width="6" height="4" viewBox="0 0 6 4"><path d="M0.8 0.8 L2.8 2.8 L4.8 0.8" fill="none" stroke="#555" stroke-width="1.4"/></svg>
<div class="a" style="left:921.3px;top:66px;width:1.0px;height:79px;background:#d2d2d2;"></div>
<div class="a" style="left:967.7px;top:66px;width:1.0px;height:79px;background:#d2d2d2;"></div>
<div class="t u" style="left:980.50px;top:99.53px;font-size:10.6px;line-height:10.6px;color:#444;">Id</div>
<div class="t u" style="left:980.50px;top:134.53px;font-size:10.6px;line-height:10.6px;color:#444;">Id</div>
<div class="a" style="left:986.6px;top:64px;width:9.899999999999977px;height:84px;background:#ffffff;box-sizing:border-box;border:1px solid #e8e8e8;"></div>
<svg class="a" style="left:989px;top:103px;" width="5" height="7" viewBox="0 0 5 7"><path d="M0.5 0.5 L3.5 3.5 L0.5 6.5" fill="none" stroke="#777" stroke-width="1"/></svg>
<svg class="a" style="left:1001px;top:138px;" width="12" height="7" viewBox="0 0 12 7"><path d="M1 6 L6 1 L11 6" fill="none" stroke="#555" stroke-width="1.3"/></svg>
<div class="a" style="left:951.3px;top:42px;width:25.700000000000045px;height:20px;background:#fdfdfd;box-sizing:border-box;border:1px solid #ececec;"></div>
<svg class="a" style="left:957px;top:45px;" width="14" height="13" viewBox="0 0 14 13"><path d="M1 5 V12 H12 V8" fill="none" stroke="#217346" stroke-width="1.2"/><path d="M4 9 C5 5 8 4 11 4 M8.5 1.5 L11.5 4 L8.5 6.5" fill="none" stroke="#217346" stroke-width="1.2"/></svg>
<div class="a" style="left:986.6px;top:42px;width:13.399999999999977px;height:20px;background:#fdfdfd;box-sizing:border-box;border:1px solid #ececec;"></div>
<svg class="a" style="left:991px;top:46px;" width="7" height="12" viewBox="0 0 7 12"><path d="M6 1 H1.5 V8 H6" fill="none" stroke="#217346" stroke-width="1.3"/><path d="M3 8 V11" stroke="#217346" stroke-width="1.2"/></svg>
<div class="a" style="left:997.8px;top:40px;width:9.700000000000045px;height:24px;background:#ffffff;box-sizing:border-box;border:1px solid #e0e0e0;"></div>
<svg class="a" style="left:1000.5px;top:48px;" width="5" height="7" viewBox="0 0 5 7"><path d="M0.5 0.5 L3.5 3.5 L0.5 6.5" fill="none" stroke="#777" stroke-width="1"/></svg>
<div class="a" style="left:1011px;top:40px;width:8px;height:24px;background:#f3f3f3;"></div>
<div class="a" style="left:494px;top:147px;width:525px;height:56px;background:#e6e6e6;"></div>
<div class="a" style="left:494px;top:147px;width:525px;height:5px;background:linear-gradient(#d2d2d2,#e6e6e6);"></div>
<div class="a" style="left:500px;top:157px;width:224.5px;height:23px;background:#fff;box-sizing:border-box;border:1px solid #d4d4d4;"></div>
<svg class="a" style="left:711.5px;top:165px;" width="8" height="5" viewBox="0 0 8 5"><path d="M0 0 H7 L3.5 4 Z" fill="#555"/></svg>
<div class="t u" style="left:505.50px;top:164.53px;font-size:10.6px;line-height:10.6px;color:#444;">A1</div>
<div class="a" style="left:737px;top:164px;width:1.5px;height:1.5px;background:#b0b0b0;"></div>
<div class="a" style="left:737px;top:167.5px;width:1.5px;height:1.5px;background:#b0b0b0;"></div>
<div class="a" style="left:737px;top:171px;width:1.5px;height:1.5px;background:#b0b0b0;"></div>
<div class="a" style="left:751px;top:157px;width:94.5px;height:23px;background:#fff;box-sizing:border-box;border:1px solid #d4d4d4;"></div>
<svg class="a" style="left:762.5px;top:163.5px;" width="10" height="10" viewBox="0 0 10 10"><path d="M1 1 L9 9 M9 1 L1 9" stroke="#bdbdbd" stroke-width="1.2"/></svg>
<svg class="a" style="left:792px;top:163.5px;" width="13" height="10" viewBox="0 0 13 10"><path d="M1 5 L4.5 9 L12 1" fill="none" stroke="#c4c4c4" stroke-width="1.6"/></svg>
<div class="t" style="left:679.50px;width:300px;text-align:center;top:162.84px;font-size:12px;line-height:12px;color:#6a6a6a;font-family:"Liberation Serif",sans-serif;"><i>f</i><span style='font-size:8px'><i>x</i></span></div>
<div class="a" style="left:849.5px;top:157px;width:164.5px;height:23px;background:#fff;box-sizing:border-box;border:1px solid #d4d4d4;"></div>
<div class="t u" style="left:860.00px;top:164.03px;font-size:10.6px;line-height:10.6px;color:#444;">CLASS CARS - Northern</div>
<svg class="a" style="left:1002px;top:165px;" width="9" height="6" viewBox="0 0 9 6"><path d="M0.8 0.8 L4.5 4.5 L8.2 0.8" fill="none" stroke="#555" stroke-width="1.5"/></svg>
<div class="a" style="left:516px;top:202px;width:484.5px;height:193.5px;background:#ffffff;"></div>
<div class="a" style="left:516px;top:190px;width:223.70000000000005px;height:12px;background:#d6d6d6;"></div>
<div class="a" style="left:495px;top:202px;width:21px;height:162.5px;background:#dcdcdc;"></div>
<div class="a" style="left:571.8px;top:188.5px;width:1.0px;height:207.0px;background:#dadada;"></div>
<div class="a" style="left:627.5px;top:188.5px;width:1.0px;height:207.0px;background:#dadada;"></div>
<div class="a" style="left:683.3px;top:188.5px;width:1.0px;height:207.0px;background:#dadada;"></div>
<div class="a" style="left:739.7px;top:188.5px;width:1.0px;height:207.0px;background:#dadada;"></div>
<div class="a" style="left:794.3px;top:188.5px;width:1.0px;height:207.0px;background:#dadada;"></div>
<div class="a" style="left:850.6px;top:188.5px;width:1.0px;height:207.0px;background:#dadada;"></div>
<div class="a" style="left:906.5px;top:188.5px;width:1.0px;height:207.0px;background:#dadada;"></div>
<div class="a" style="left:961.5px;top:188.5px;width:1.0px;height:207.0px;background:#dadada;"></div>
<div class="a" style="left:516px;top:229.5px;width:484.5px;height:1.0px;background:#e1e1e1;"></div>
<div class="a" style="left:516px;top:244.5px;width:484.5px;height:1.0px;background:#e1e1e1;"></div>
<div class="a" style="left:516px;top:259.5px;width:484.5px;height:1.0px;background:#e1e1e1;"></div>
<div class="a" style="left:516px;top:274.3px;width:484.5px;height:1.0px;background:#e1e1e1;"></div>
<div class="a" style="left:516px;top:289px;width:484.5px;height:1px;background:#e1e1e1;"></div>
<div class="a" style="left:516px;top:303.5px;width:484.5px;height:1.0px;background:#e1e1e1;"></div>
<div class="a" style="left:516px;top:318.5px;width:484.5px;height:1.0px;background:#e1e1e1;"></div>
<div class="a" style="left:516px;top:333.5px;width:484.5px;height:1.0px;background:#e1e1e1;"></div>
<div class="a" style="left:516px;top:349.5px;width:484.5px;height:1.0px;background:#e1e1e1;"></div>
<div class="a" style="left:516px;top:364.5px;width:484.5px;height:1.0px;background:#e1e1e1;"></div>
<div class="a" style="left:516px;top:379.5px;width:484.5px;height:1.0px;background:#e1e1e1;"></div>
<div class="a" style="left:571.8px;top:190px;width:1.0px;height:12px;background:#bcbcbc;"></div>
<div class="a" style="left:627.5px;top:190px;width:1.0px;height:12px;background:#bcbcbc;"></div>
<div class="a" style="left:683.3px;top:190px;width:1.0px;height:12px;background:#bcbcbc;"></div>
<div class="a" style="left:494px;top:202px;width:506.5px;height:1px;background:#c4c4c4;"></div>
<div class="a" style="left:516px;top:188.5px;width:1px;height:207.0px;background:#c4c4c4;"></div>
<div class="a" style="left:494px;top:395.5px;width:506.5px;height:1.0px;background:#c6c6c6;"></div>
<div class="a" style="left:496px;top:229.5px;width:20px;height:1.0px;background:#d0d0d0;"></div>
<div class="a" style="left:496px;top:244.5px;width:20px;height:1.0px;background:#d0d0d0;"></div>
<div class="a" style="left:496px;top:259.5px;width:20px;height:1.0px;background:#d0d0d0;"></div>
<div class="a" style="left:496px;top:274.3px;width:20px;height:1.0px;background:#d0d0d0;"></div>
<div class="a" style="left:496px;top:289px;width:20px;height:1px;background:#d0d0d0;"></div>
<div class="a" style="left:496px;top:303.5px;width:20px;height:1.0px;background:#d0d0d0;"></div>
<div class="a" style="left:496px;top:318.5px;width:20px;height:1.0px;background:#d0d0d0;"></div>
<div class="a" style="left:496px;top:333.5px;width:20px;height:1.0px;background:#d0d0d0;"></div>
<div class="a" style="left:496px;top:349.5px;width:20px;height:1.0px;background:#d0d0d0;"></div>
<div class="a" style="left:496px;top:364.5px;width:20px;height:1.0px;background:#d0d0d0;"></div>
<div class="a" style="left:496px;top:379.5px;width:20px;height:1.0px;background:#d0d0d0;"></div>
<svg class="a" style="left:506.5px;top:191.5px;" width="9" height="9" viewBox="0 0 9 9"><path d="M8.5 0 V8.5 H0 Z" fill="#c1c1c1"/></svg>
<div class="t" style="left:393.90px;width:300px;text-align:center;top:190.49px;font-size:11px;line-height:11px;color:#217346;">A</div>
<div class="t" style="left:449.65px;width:300px;text-align:center;top:190.49px;font-size:11px;line-height:11px;color:#217346;">B</div>
<div class="t" style="left:505.40px;width:300px;text-align:center;top:190.49px;font-size:11px;line-height:11px;color:#217346;">C</div>
<div class="t" style="left:561.50px;width:300px;text-align:center;top:190.49px;font-size:11px;line-height:11px;color:#217346;">D</div>
<div class="t u" style="left:617.00px;width:300px;text-align:center;top:190.49px;font-size:11px;line-height:11px;color:#444;">E</div>
<div class="t u" style="left:672.45px;width:300px;text-align:center;top:190.49px;font-size:11px;line-height:11px;color:#444;">F</div>
<div class="t u" style="left:728.55px;width:300px;text-align:center;top:190.49px;font-size:11px;line-height:11px;color:#444;">G</div>
<div class="t u" style="left:784.00px;width:300px;text-align:center;top:190.49px;font-size:11px;line-height:11px;color:#444;">H</div>
<div class="t u" style="left:831.00px;width:300px;text-align:center;top:190.49px;font-size:11px;line-height:11px;color:#444;">I</div>
<div class="t" style="left:355.50px;width:300px;text-align:center;top:215.30px;font-size:12.4px;line-height:12.4px;color:#217346;transform:scaleX(0.86);">1</div>
<div class="t" style="left:355.50px;width:300px;text-align:center;top:230.30px;font-size:12.4px;line-height:12.4px;color:#217346;transform:scaleX(0.86);">2</div>
<div class="t" style="left:355.50px;width:300px;text-align:center;top:245.30px;font-size:12.4px;line-height:12.4px;color:#217346;transform:scaleX(0.86);">3</div>
<div class="t" style="left:355.50px;width:300px;text-align:center;top:260.10px;font-size:12.4px;line-height:12.4px;color:#217346;transform:scaleX(0.86);">4</div>
<div class="t" style="left:355.50px;width:300px;text-align:center;top:274.80px;font-size:12.4px;line-height:12.4px;color:#217346;transform:scaleX(0.86);">5</div>
<div class="t" style="left:355.50px;width:300px;text-align:center;top:289.30px;font-size:12.4px;line-height:12.4px;color:#217346;transform:scaleX(0.86);">6</div>
<div class="t" style="left:355.50px;width:300px;text-align:center;top:304.30px;font-size:12.4px;line-height:12.4px;color:#217346;transform:scaleX(0.86);">7</div>
<div class="t" style="left:355.50px;width:300px;text-align:center;top:319.30px;font-size:12.4px;line-height:12.4px;color:#217346;transform:scaleX(0.86);">8</div>
<div class="t" style="left:355.50px;width:300px;text-align:center;top:335.30px;font-size:12.4px;line-height:12.4px;color:#217346;transform:scaleX(0.86);">9</div>
<div class="t" style="left:355.50px;width:300px;text-align:center;top:350.30px;font-size:12.4px;line-height:12.4px;color:#217346;transform:scaleX(0.86);">10</div>
<div class="t u" style="left:355.50px;width:300px;text-align:center;top:365.30px;font-size:12.4px;line-height:12.4px;color:#444;transform:scaleX(0.86);">11</div>
<div class="t u" style="left:355.50px;width:300px;text-align:center;top:381.30px;font-size:12.4px;line-height:12.4px;color:#444;transform:scaleX(0.86);">12</div>
<div class="a" style="left:1000.5px;top:188.5px;width:17.0px;height:207.0px;background:#e6e6e6;"></div>
<div class="a" style="left:1004.0px;top:190.5px;width:12.0px;height:12.5px;background:#ffffff;box-sizing:border-box;border:1px solid #d6d6d6;"></div>
<svg class="a" style="left:1007.0px;top:194.5px;" width="7" height="4" viewBox="0 0 7 4"><path d="M0 3.5 L3 0 L6 3.5 Z" fill="#666"/></svg>
<div class="a" style="left:1004.5px;top:204px;width:11.0px;height:106px;background:#ffffff;box-sizing:border-box;border:1px solid #d0d0d0;"></div>
<div class="a" style="left:1004.5px;top:310px;width:11.0px;height:71px;background:#d9d9d9;"></div>
<div class="a" style="left:1004.0px;top:381px;width:12.0px;height:14.5px;background:#ffffff;box-sizing:border-box;border:1px solid #d6d6d6;"></div>
<svg class="a" style="left:1007.0px;top:386px;" width="7" height="4" viewBox="0 0 7 4"><path d="M0 0 L3 3.5 L6 0 Z" fill="#666"/></svg>
<div class="a" style="left:494px;top:396.5px;width:525px;height:23.5px;background:#e6e6e6;"></div>
<div class="a" style="left:494px;top:419.5px;width:525px;height:1.0px;background:#d6d6d6;"></div>
<svg class="a" style="left:518px;top:402.5px;" width="5" height="8" viewBox="0 0 5 8"><path d="M4 0 L0 3.5 L4 7 Z" fill="#c6c6c6"/></svg>
<svg class="a" style="left:544px;top:402.5px;" width="5" height="8" viewBox="0 0 5 8"><path d="M0 0 L4 3.5 L0 7 Z" fill="#c6c6c6"/></svg>
<div class="t u" style="left:482.35px;width:300px;text-align:center;top:401.44px;font-size:10.7px;line-height:10.7px;color:#555;">CarSales-South</div>
<div class="a" style="left:682.7px;top:395.5px;width:55.799999999999955px;height:21.0px;background:#ffffff;"></div>
<div class="a" style="left:682.7px;top:414.5px;width:55.799999999999955px;height:2.0px;background:#217346;"></div>
<div class="t" style="left:560.60px;width:300px;text-align:center;top:401.36px;font-size:10.8px;line-height:10.8px;color:#217346;font-weight:700;">Sheet2</div>
<div class="a" style="left:582px;top:399px;width:1px;height:17px;background:#a8a8a8;"></div>
<svg class="a" style="left:766.3px;top:398.5px;" width="16" height="16" viewBox="0 0 16 16"><circle cx="8" cy="8" r="6.8" fill="none" stroke="#7a7a7a" stroke-width="1"/><path d="M8 4.2 V11.8 M4.2 8 H11.8" stroke="#666" stroke-width="1.3"/></svg>
<div class="a" style="left:809.3px;top:403px;width:1.5px;height:1.5px;background:#a6a6a6;"></div>
<div class="a" style="left:809.3px;top:406.5px;width:1.5px;height:1.5px;background:#a6a6a6;"></div>
<div class="a" style="left:809.3px;top:410px;width:1.5px;height:1.5px;background:#a6a6a6;"></div>
<div class="a" style="left:824.6px;top:401px;width:13.5px;height:13px;background:#fff;box-sizing:border-box;border:1px solid #c8c8c8;"></div>
<svg class="a" style="left:829.1px;top:404px;" width="5" height="8" viewBox="0 0 5 8"><path d="M4 0 L0 3.5 L4 7 Z" fill="#555"/></svg>
<div class="a" style="left:837.6px;top:401px;width:130.39999999999998px;height:13px;background:#fff;box-sizing:border-box;border:1px solid #c8c8c8;"></div>
<div class="a" style="left:968px;top:402px;width:19.399999999999977px;height:11px;background:#d6d6d6;"></div>
<div class="a" style="left:987.4px;top:401px;width:12.600000000000023px;height:13px;background:#fff;box-sizing:border-box;border:1px solid #d6d6d6;"></div>
<svg class="a" style="left:992.4px;top:404px;" width="5" height="8" viewBox="0 0 5 8"><path d="M0 0 L4 3.5 L0 7 Z" fill="#555"/></svg>
<div class="a" style="left:494px;top:420px;width:525px;height:19px;background:#f3f3f3;"></div>
<div class="t u" style="left:521.00px;top:424.75px;font-size:9.75px;line-height:9.75px;color:#555;">Average: 313306.5</div>
<div class="t u" style="left:614.30px;top:424.75px;font-size:9.75px;line-height:9.75px;color:#555;">Count: 22</div>
<div class="t u" style="left:672.00px;top:424.75px;font-size:9.75px;line-height:9.75px;color:#555;">Sum: 3759678</div>
<div class="a" style="left:749px;top:420px;width:34px;height:19px;background:#c8c8c8;"></div>
<svg class="a" style="left:760px;top:423px;" width="12" height="12" viewBox="0 0 12 12"><rect x="0.6" y="0.6" width="10.8" height="10.8" fill="none" stroke="#3a3a3a" stroke-width="1.2"/><path d="M4.2 0.5 V11.5 M7.8 0.5 V11.5 M0.5 4.2 H11.5 M0.5 7.8 H11.5" stroke="#3a3a3a" stroke-width="1"/></svg>
<svg class="a" style="left:794.4px;top:422.5px;" width="13" height="12" viewBox="0 0 13 12"><rect x="0.75" y="0.75" width="11.5" height="10.5" fill="none" stroke="#444" stroke-width="1.5"/><rect x="3.5" y="2.5" width="6" height="7" fill="none" stroke="#555" stroke-width="1"/><path d="M4.5 5 H8.5 M4.5 7 H8.5" stroke="#777" stroke-width="0.8"/></svg>
<svg class="a" style="left:833px;top:422.5px;" width="13" height="12" viewBox="0 0 13 12"><rect x="0.75" y="0.75" width="11.5" height="10.5" fill="none" stroke="#444" stroke-width="1.5"/><path d="M4 0.5 V6.5 H8.5 V0.5" fill="none" stroke="#444" stroke-width="1.2"/></svg>
<div class="a" style="left:855.5px;top:428px;width:6.0px;height:1.3000000000000114px;background:#555;"></div>
<div class="a" style="left:868.7px;top:428px;width:87.29999999999995px;height:1.1999999999999886px;background:#c4c4c4;"></div>
<div class="a" style="left:911px;top:424.5px;width:4.5px;height:9.0px;background:#6a6a6a;"></div>
<div class="a" style="left:959.2px;top:428px;width:9.0px;height:1.3000000000000114px;background:#555;"></div>
<div class="a" style="left:963.1px;top:423.5px;width:1.2999999999999545px;height:9.0px;background:#555;"></div>
<div class="t" style="left:979.60px;top:423.97px;font-size:10.2px;line-height:10.2px;color:#5a5a5a;">100%</div>
<div class="t" style="left:34.00px;top:206.53px;font-size:20.4px;line-height:20.4px;color:#0000ff;font-weight:700;font-style:italic;">CLASS CARS - Northern region</div>
<div class="t" style="left:31.00px;top:246.13px;font-size:11.3px;line-height:11.3px;color:#222;">Sales Figures to June</div>
<div class="t" style="left:31.00px;top:275.38px;font-size:11.6px;line-height:11.6px;color:#111;font-weight:700;letter-spacing:0.65px;">Used Car Sales</div>
<div class="t" style="left:173.00px;top:275.12px;font-size:12.5px;line-height:12.5px;color:#333;font-style:italic;letter-spacing:-0.6px;">April</div>
<div class="t" style="left:232.50px;top:275.12px;font-size:12.5px;line-height:12.5px;color:#333;font-style:italic;letter-spacing:-0.6px;">May</div>
<div class="t" style="left:291.50px;top:275.12px;font-size:12.5px;line-height:12.5px;color:#333;font-style:italic;letter-spacing:-0.6px;">June</div>
<div class="t" style="left:31.00px;top:290.37px;font-size:11.5px;line-height:11.5px;color:#222;">Sedans</div>
<div class="t" style="left:31.00px;top:305.47px;font-size:11.5px;line-height:11.5px;color:#222;">Wagons</div>
<div class="t" style="left:31.00px;top:319.47px;font-size:11.5px;line-height:11.5px;color:#222;">Utilities</div>
<div class="t" style="left:31.00px;top:334.28px;font-size:11.6px;line-height:11.6px;color:#111;font-weight:700;letter-spacing:0.5px;">Total</div>
<div class="t" style="left:173.30px;top:289.60px;font-size:12.4px;line-height:12.4px;color:#2a2a2a;transform:scaleX(0.85);transform-origin:0 0;-webkit-text-stroke:0.2px #2a2a2a;">$</div>
<div class="t" style="left:-79.80px;width:300px;text-align:right;top:289.60px;font-size:12.4px;line-height:12.4px;color:#2a2a2a;transform:scaleX(0.84);transform-origin:100% 0;-webkit-text-stroke:0.2px #2a2a2a;">105,000</div>
<div class="t" style="left:232.80px;top:289.60px;font-size:12.4px;line-height:12.4px;color:#2a2a2a;transform:scaleX(0.85);transform-origin:0 0;-webkit-text-stroke:0.2px #2a2a2a;">$</div>
<div class="t" style="left:-20.80px;width:300px;text-align:right;top:289.60px;font-size:12.4px;line-height:12.4px;color:#2a2a2a;transform:scaleX(0.84);transform-origin:100% 0;-webkit-text-stroke:0.2px #2a2a2a;">150,500</div>
<div class="t" style="left:291.80px;top:289.60px;font-size:12.4px;line-height:12.4px;color:#2a2a2a;transform:scaleX(0.85);transform-origin:0 0;-webkit-text-stroke:0.2px #2a2a2a;">$</div>
<div class="t" style="left:38.20px;width:300px;text-align:right;top:289.60px;font-size:12.4px;line-height:12.4px;color:#2a2a2a;transform:scaleX(0.84);transform-origin:100% 0;-webkit-text-stroke:0.2px #2a2a2a;">175,000</div>
<div class="t" style="left:173.30px;top:304.70px;font-size:12.4px;line-height:12.4px;color:#2a2a2a;transform:scaleX(0.85);transform-origin:0 0;-webkit-text-stroke:0.2px #2a2a2a;">$</div>
<div class="t" style="left:-79.80px;width:300px;text-align:right;top:304.70px;font-size:12.4px;line-height:12.4px;color:#2a2a2a;transform:scaleX(0.84);transform-origin:100% 0;-webkit-text-stroke:0.2px #2a2a2a;">275,000</div>
<div class="t" style="left:232.80px;top:304.70px;font-size:12.4px;line-height:12.4px;color:#2a2a2a;transform:scaleX(0.85);transform-origin:0 0;-webkit-text-stroke:0.2px #2a2a2a;">$</div>
<div class="t" style="left:-20.80px;width:300px;text-align:right;top:304.70px;font-size:12.4px;line-height:12.4px;color:#2a2a2a;transform:scaleX(0.84);transform-origin:100% 0;-webkit-text-stroke:0.2px #2a2a2a;">108,395</div>
<div class="t" style="left:291.80px;top:304.70px;font-size:12.4px;line-height:12.4px;color:#2a2a2a;transform:scaleX(0.85);transform-origin:0 0;-webkit-text-stroke:0.2px #2a2a2a;">$</div>
<div class="t" style="left:38.20px;width:300px;text-align:right;top:304.70px;font-size:12.4px;line-height:12.4px;color:#2a2a2a;transform:scaleX(0.84);transform-origin:100% 0;-webkit-text-stroke:0.2px #2a2a2a;">299,495</div>
<div class="t" style="left:173.30px;top:318.70px;font-size:12.4px;line-height:12.4px;color:#2a2a2a;transform:scaleX(0.85);transform-origin:0 0;-webkit-text-stroke:0.2px #2a2a2a;">$</div>
<div class="t" style="left:-79.80px;width:300px;text-align:right;top:318.70px;font-size:12.4px;line-height:12.4px;color:#2a2a2a;transform:scaleX(0.84);transform-origin:100% 0;-webkit-text-stroke:0.2px #2a2a2a;">307,050</div>
<div class="t" style="left:232.80px;top:318.70px;font-size:12.4px;line-height:12.4px;color:#2a2a2a;transform:scaleX(0.85);transform-origin:0 0;-webkit-text-stroke:0.2px #2a2a2a;">$</div>
<div class="t" style="left:-20.80px;width:300px;text-align:right;top:318.70px;font-size:12.4px;line-height:12.4px;color:#2a2a2a;transform:scaleX(0.84);transform-origin:100% 0;-webkit-text-stroke:0.2px #2a2a2a;">209,399</div>
<div class="t" style="left:291.80px;top:318.70px;font-size:12.4px;line-height:12.4px;color:#2a2a2a;transform:scaleX(0.85);transform-origin:0 0;-webkit-text-stroke:0.2px #2a2a2a;">$</div>
<div class="t" style="left:38.20px;width:300px;text-align:right;top:318.70px;font-size:12.4px;line-height:12.4px;color:#2a2a2a;transform:scaleX(0.84);transform-origin:100% 0;-webkit-text-stroke:0.2px #2a2a2a;">250,000</div>
<div class="t" style="left:173.30px;top:333.60px;font-size:12.4px;line-height:12.4px;color:#2a2a2a;transform:scaleX(0.85);transform-origin:0 0;-webkit-text-stroke:0.2px #2a2a2a;">$</div>
<div class="t" style="left:-79.80px;width:300px;text-align:right;top:333.60px;font-size:12.4px;line-height:12.4px;color:#2a2a2a;transform:scaleX(0.84);transform-origin:100% 0;-webkit-text-stroke:0.2px #2a2a2a;">687,050</div>
<div class="t" style="left:232.80px;top:333.60px;font-size:12.4px;line-height:12.4px;color:#2a2a2a;transform:scaleX(0.85);transform-origin:0 0;-webkit-text-stroke:0.2px #2a2a2a;">$</div>
<div class="t" style="left:-20.80px;width:300px;text-align:right;top:333.60px;font-size:12.4px;line-height:12.4px;color:#2a2a2a;transform:scaleX(0.84);transform-origin:100% 0;-webkit-text-stroke:0.2px #2a2a2a;">468,294</div>
<div class="t" style="left:291.80px;top:333.60px;font-size:12.4px;line-height:12.4px;color:#2a2a2a;transform:scaleX(0.85);transform-origin:0 0;-webkit-text-stroke:0.2px #2a2a2a;">$</div>
<div class="t" style="left:38.20px;width:300px;text-align:right;top:333.60px;font-size:12.4px;line-height:12.4px;color:#2a2a2a;transform:scaleX(0.84);transform-origin:100% 0;-webkit-text-stroke:0.2px #2a2a2a;">724,495</div>
<div class="a" style="left:166px;top:332px;width:177.5px;height:1px;background:#555;"></div>
<div class="a" style="left:166px;top:347.2px;width:177.5px;height:3.1999999999999886px;background:#9a9a9a;"></div>
<div class="a" style="left:166px;top:347.2px;width:177.5px;height:1.0px;background:#5a5a5a;"></div>
<div class="a" style="left:166px;top:349.4px;width:177.5px;height:1.0px;background:#5a5a5a;"></div>
<svg class="a" style="left:28px;top:202px;" width="317" height="163" viewBox="0 0 317 163"><rect x="1" y="1" width="314.5" height="160.5" fill="none" stroke="#4a9068" stroke-width="2" stroke-dasharray="5.2 2.6"/></svg>
<div class="a" style="left:516px;top:202px;width:225px;height:164px;overflow:hidden;"></div>
<div class="t" style="left:522.30px;top:206.93px;font-size:20.4px;line-height:20.4px;color:#0000ff;font-weight:700;font-style:italic;">CLASS CARS - Northern region</div>
<div class="t" style="left:519.80px;top:247.23px;font-size:11.3px;line-height:11.3px;color:#222;">Sales Figures to June</div>
<div class="a" style="left:516px;top:275px;width:55.8px;height:14px;overflow:hidden;">
<div class="t" style="left:3.8px;top:0.9px;font-size:11.6px;line-height:11.6px;color:#111;font-weight:700;letter-spacing:0.9px;">Used Car Sales</div></div>
<div class="t" style="left:579.40px;top:275.42px;font-size:12.5px;line-height:12.5px;color:#333;font-style:italic;letter-spacing:-0.6px;">April</div>
<div class="t" style="left:635.00px;top:275.42px;font-size:12.5px;line-height:12.5px;color:#333;font-style:italic;letter-spacing:-0.6px;">May</div>
<div class="t" style="left:691.00px;top:275.42px;font-size:12.5px;line-height:12.5px;color:#333;font-style:italic;letter-spacing:-0.6px;">June</div>
<div class="t" style="left:519.80px;top:291.07px;font-size:11.5px;line-height:11.5px;color:#222;">Sedans</div>
<div class="t" style="left:519.80px;top:306.07px;font-size:11.5px;line-height:11.5px;color:#222;">Wagons</div>
<div class="t" style="left:519.80px;top:320.47px;font-size:11.5px;line-height:11.5px;color:#222;">Utilities</div>
<div class="t" style="left:519.80px;top:335.38px;font-size:11.6px;line-height:11.6px;color:#111;font-weight:700;letter-spacing:0.5px;">Total</div>
<div class="t" style="left:325.00px;width:300px;text-align:right;top:291.32px;font-size:11.2px;line-height:11.2px;color:#333;font-weight:700;letter-spacing:-0.2px;">#######</div>
<div class="t" style="left:379.30px;width:300px;text-align:right;top:291.32px;font-size:11.2px;line-height:11.2px;color:#333;font-weight:700;letter-spacing:-0.2px;">#######</div>
<div class="t" style="left:435.80px;width:300px;text-align:right;top:291.32px;font-size:11.2px;line-height:11.2px;color:#333;font-weight:700;letter-spacing:-0.2px;">#######</div>
<div class="t" style="left:325.00px;width:300px;text-align:right;top:306.32px;font-size:11.2px;line-height:11.2px;color:#333;font-weight:700;letter-spacing:-0.2px;">#######</div>
<div class="t" style="left:379.30px;width:300px;text-align:right;top:306.32px;font-size:11.2px;line-height:11.2px;color:#333;font-weight:700;letter-spacing:-0.2px;">#######</div>
<div class="t" style="left:435.80px;width:300px;text-align:right;top:306.32px;font-size:11.2px;line-height:11.2px;color:#333;font-weight:700;letter-spacing:-0.2px;">#######</div>
<div class="t" style="left:325.00px;width:300px;text-align:right;top:320.72px;font-size:11.2px;line-height:11.2px;color:#333;font-weight:700;letter-spacing:-0.2px;">#######</div>
<div class="t" style="left:379.30px;width:300px;text-align:right;top:320.72px;font-size:11.2px;line-height:11.2px;color:#333;font-weight:700;letter-spacing:-0.2px;">#######</div>
<div class="t" style="left:435.80px;width:300px;text-align:right;top:320.72px;font-size:11.2px;line-height:11.2px;color:#333;font-weight:700;letter-spacing:-0.2px;">#######</div>
<div class="t" style="left:325.00px;width:300px;text-align:right;top:335.72px;font-size:11.2px;line-height:11.2px;color:#333;font-weight:700;letter-spacing:-0.2px;">#######</div>
<div class="t" style="left:379.30px;width:300px;text-align:right;top:335.72px;font-size:11.2px;line-height:11.2px;color:#333;font-weight:700;letter-spacing:-0.2px;">#######</div>
<div class="t" style="left:435.80px;width:300px;text-align:right;top:335.72px;font-size:11.2px;line-height:11.2px;color:#333;font-weight:700;letter-spacing:-0.2px;">#######</div>
<div class="a" style="left:571.8px;top:333px;width:167.9000000000001px;height:1px;background:#555;"></div>
<div class="a" style="left:571.8px;top:348px;width:166.4000000000001px;height:3px;background:#888;"></div>
<div class="a" style="left:571.8px;top:348px;width:166.4000000000001px;height:1px;background:#555;"></div>
<div class="a" style="left:571.8px;top:350px;width:166.4000000000001px;height:1px;background:#555;"></div>
<div class="a" style="left:571.8px;top:202px;width:167.9000000000001px;height:27.5px;background:rgba(0,0,0,0.2);"></div>
<div class="a" style="left:516px;top:229.5px;width:223.70000000000005px;height:135.0px;background:rgba(0,0,0,0.2);"></div>
<div class="a" style="left:516px;top:201.8px;width:224.20000000000005px;height:164.5px;box-sizing:border-box;border:2px solid #217346;"></div>
<div class="a" style="left:736.2px;top:362.3px;width:5.599999999999909px;height:5.5px;background:#217346;box-sizing:border-box;border:1px solid #ffffff;"></div>
<div class="a" style="left:743px;top:344px;width:20.5px;height:20.5px;background:#ffffff;box-sizing:border-box;border:1px solid #eaeaea;"></div>
<svg class="a" style="left:747px;top:347.5px;" width="13" height="13" viewBox="0 0 13 13"><rect x="3" y="3" width="9" height="9" fill="none" stroke="#dadada"/><path d="M1 1 V5 H5" stroke="#f3c9a0" fill="none" stroke-width="1.5"/></svg>
<div class="a" style="left:742.4px;top:368px;width:52.60000000000002px;height:19.5px;background:#ffffff;box-sizing:border-box;border:1px solid #c8c8c8;"></div>
<svg class="a" style="left:745.5px;top:371.5px;" width="15" height="14" viewBox="0 0 15 14"><rect x="1" y="2" width="8" height="11" fill="#e8b050"/><rect x="3" y="0.5" width="4" height="2.5" fill="#777"/><path d="M6 6.5 H10.5 L13 9 V13.5 H6 Z" fill="#fff" stroke="#444" stroke-width="0.9"/></svg>
<div class="t u" style="left:762.00px;top:373.29px;font-size:11px;line-height:11px;color:#444;">(Ctrl)</div>
<svg class="a" style="left:787.5px;top:377px;" width="6" height="4" viewBox="0 0 6 4"><path d="M0 0 H5 L2.5 3 Z" fill="#444"/></svg>
<div class="a" style="left:5px;top:8px;width:486px;height:431px;box-sizing:border-box;border:1px solid #a59f88;"></div>
<div class="a" style="left:494px;top:8px;width:525.5px;height:431px;box-sizing:border-box;border:1px solid #217346;"></div>
<svg class="a" style="left:345px;top:255px;overflow:visible" width="180" height="45" viewBox="345 255 180 45"><defs><filter id="sh" x="-20%" y="-50%" width="140%" height="200%"><feGaussianBlur stdDeviation="1.6"/></filter></defs><g transform="translate(1.5,3)" filter="url(#sh)" opacity="0.42"><path d="M355.5 276.4 H487" stroke="#333" stroke-width="8.6" stroke-linecap="round"/><path d="M486 264 L511.7 276.3 L486 288.7 Z" fill="#333"/></g><path d="M360 276.4 H488" stroke="#f5434a" stroke-width="8.6" stroke-linecap="round"/><path d="M486 264 L511.7 276.3 L486 288.7 Z" fill="#f5434a"/></svg>
</body></html>
